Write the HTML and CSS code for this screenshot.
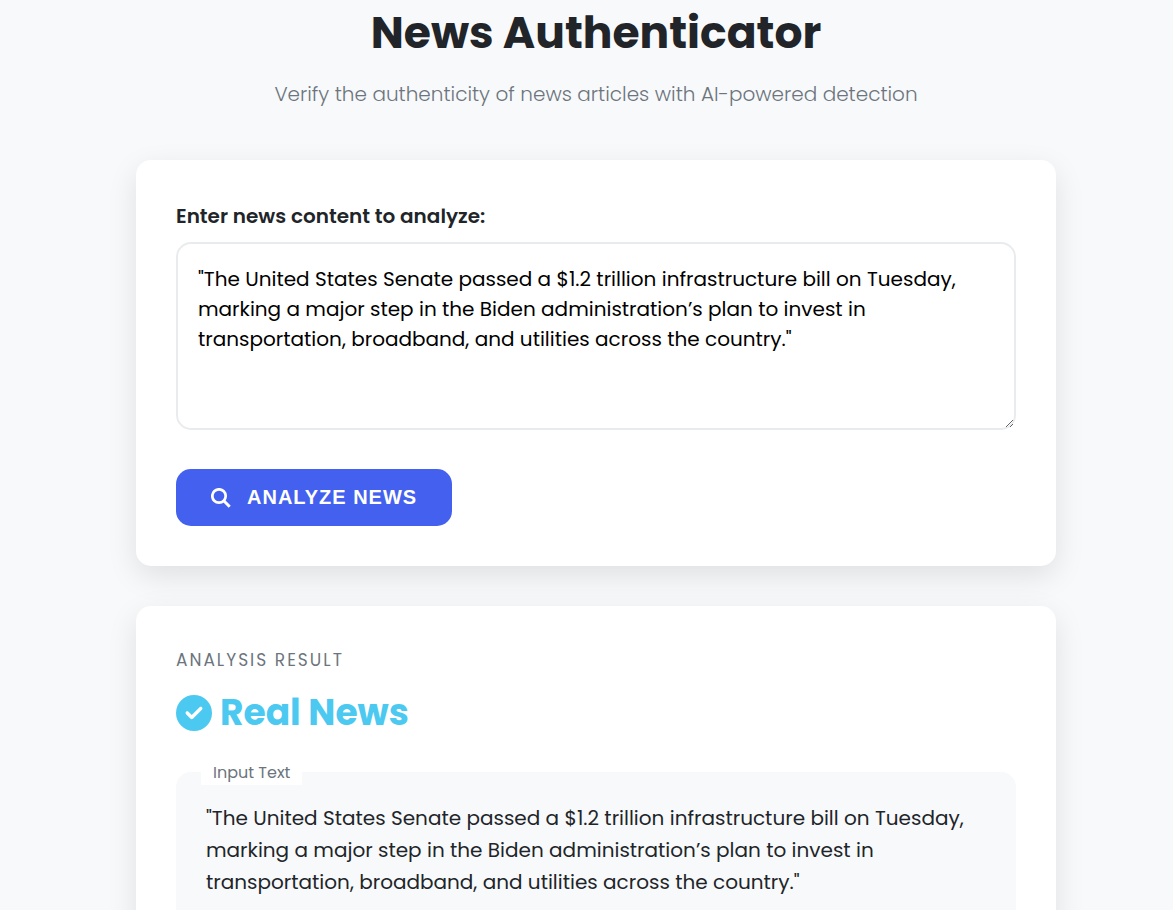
FILE: index.html
```html
<!DOCTYPE html>
<html lang="en">
<head>
<meta charset="utf-8">
<meta name="viewport" content="width=device-width, initial-scale=1">
<title>News Authenticator</title>
<link rel="stylesheet" href="styles.css">
</head>
<body>
<main class="container">
  <header class="header">
    <h1 class="title">News Authenticator</h1>
    <p class="subtitle">Verify the authenticity of news articles with AI-powered detection</p>
  </header>
  <form class="card">
    <label class="label" for="news">Enter news content to analyze:</label>
    <textarea class="news-input" id="news">"The United States Senate passed a $1.2 trillion infrastructure bill on Tuesday, marking a major step in the Biden administration’s plan to invest in transportation, broadband, and utilities across the country."</textarea>
    <button class="analyze" type="button">
      <svg class="search-icon" viewBox="0 0 20 20" aria-hidden="true"><circle cx="8" cy="8" r="6.700" fill="none" stroke="currentColor" stroke-width="2.700"/><path d="M12.800 12.800 18.700 18.700" fill="none" stroke="currentColor" stroke-width="3"/></svg>
      <span>ANALYZE NEWS</span>
    </button>
  </form>
  <section class="card">
    <h2 class="result-label">ANALYSIS RESULT</h2>
    <p class="verdict">
      <svg class="check-icon" viewBox="0 0 512 512" aria-hidden="true"><path fill="currentColor" d="M256 512A256 256 0 1 0 256 0a256 256 0 1 0 0 512zM369 209L241 337c-9.400 9.400-24.600 9.400-33.900 0l-64-64c-9.400-9.400-9.400-24.600 0-33.900s24.600-9.400 33.900 0l47 47L335 175c9.400-9.400 24.600-9.400 33.900 0s9.400 24.600 0 33.900z"/></svg>
      <span>Real News</span>
    </p>
    <div class="quote">
      <span class="quote-label">Input Text</span>
      <p class="quote-text">"The United States Senate passed a $1.2 trillion infrastructure bill on Tuesday, marking a major step in the Biden administration’s plan to invest in transportation, broadband, and utilities across the country."</p>
    </div>
  </section>
</main>
</body>
</html>
```
FILE: styles.css
```css
* { box-sizing: border-box; }
body {
  margin: 0;
  height: 100vh;
  overflow: hidden;
  background: #f8f9fb;
  color: #212529;
  font-family: Poppins, Inter, sans-serif;
  font-size: 20px;
  line-height: 32px;
}
.container {
  max-width: 939px;
  margin: 0 auto;
  padding-left: 19px;
}
.header { text-align: center; padding-bottom: 50px; }
.title { margin: 0; padding-top: 4px; font-size: 44px; font-weight: 700; line-height: 58px; }
.subtitle { margin: 16px 0 0; color: #6c757d; font-weight: 300; }
.card {
  padding: 40px;
  margin-bottom: 40px;
  background: #fff;
  border-radius: 15px;
  box-shadow: 0 10px 30px rgba(0, 0, 0, 0.1);
}
.label { display: block; margin-bottom: 10px; font-weight: 600; }
.news-input {
  display: block;
  width: 100%;
  height: 188px;
  padding: 20px;
  border: 2px solid #e9ecef;
  border-radius: 15px;
  background: #fff;
  color: #000;
  font: inherit;
  line-height: 30px;
  resize: vertical;
}
.analyze {
  display: flex;
  align-items: center;
  gap: 16px;
  margin-top: 39px;
  padding: 12px 35px;
  border: 0;
  border-radius: 15px;
  background: #4361ee;
  color: #fff;
  font: 600 20px/33px "Liberation Sans", sans-serif;
  letter-spacing: 1px;
}
.search-icon { width: 20px; height: 20px; }
.result-label { margin: 0; color: #6c757d; font-size: 17px; font-weight: 400; line-height: 28px; letter-spacing: 2px; }
.verdict {
  display: flex;
  align-items: center;
  gap: 8px;
  margin: 10px 0 30px;
  color: #4cc9f0;
  font-size: 36px;
  font-weight: 700;
  line-height: 58px;
}
.check-icon { width: 36px; height: 36px; }
.quote { position: relative; padding: 30px; border-radius: 15px; background: #f8f9fb; }
.quote-label {
  position: absolute;
  top: -12px;
  left: 25px;
  padding: 0 12px;
  background: #fff;
  color: #6c757d;
  font-size: 16px;
  line-height: 25px;
}
.quote-text { margin: 0; }
```
